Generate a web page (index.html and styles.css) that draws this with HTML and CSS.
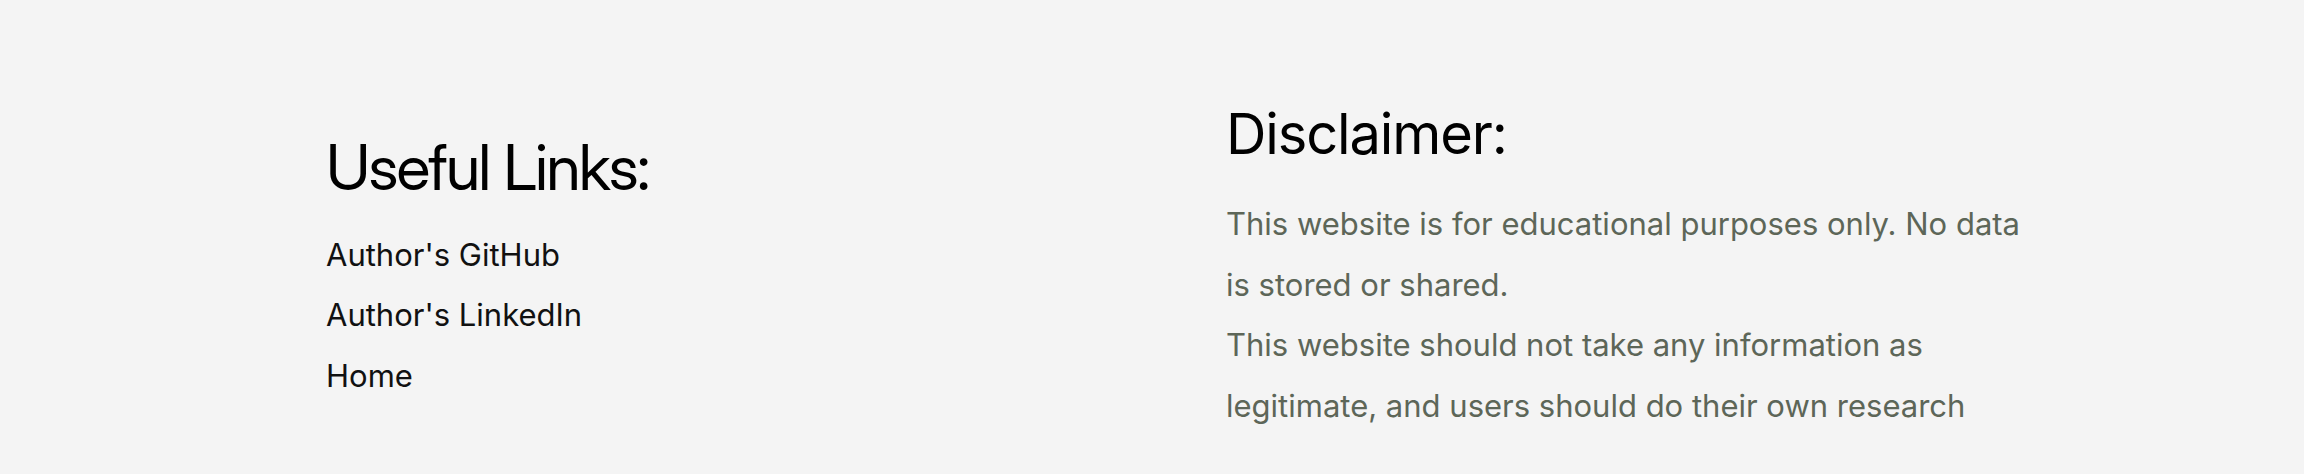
FILE: index.html
```html
<!DOCTYPE html>
<html lang="en">
<head>
<meta charset="utf-8">
<title>Footer</title>
<link rel="stylesheet" href="styles.css">
</head>
<body>
<footer class="footer">
  <section class="col col-links">
    <h2 class="title title-links">Useful Links:</h2>
    <ul class="links">
      <li><a href="#">Author's GitHub</a></li>
      <li><a href="#">Author's LinkedIn</a></li>
      <li><a href="#">Home</a></li>
    </ul>
  </section>
  <section class="col col-disclaimer">
    <h2 class="title title-disclaimer">Disclaimer:</h2>
    <p class="text">This website is for educational purposes only. No data is stored or shared.</p>
    <p class="text">This website should not take any information as legitimate, and users should do their own research</p>
  </section>
</footer>
</body>
</html>
```
FILE: styles.css
```css
html, body {
  margin: 0;
  padding: 0;
  background: #f4f4f4;
}
body {
  font-family: Inter, "Noto Sans", sans-serif;
  color: #111;
}
.footer {
  display: flex;
  align-items: center;
  height: 474px;
  padding: 62px 0 0 326px;
  box-sizing: border-box;
}
.col-links {
  width: 900px;
  flex: none;
}
.col-disclaimer {
  width: 810px;
  flex: none;
}
.title {
  margin: 0;
  font-weight: 400;
  color: #000;
}
.title-links {
  font-family: "Inter Display", Inter, sans-serif;
  font-size: 63px;
  line-height: 75px;
  letter-spacing: -0.03em;
  margin-bottom: 20px;
}
.title-disclaimer {
  font-size: 56px;
  line-height: 68px;
  letter-spacing: -0.02em;
  margin-bottom: 26px;
}
.links {
  list-style: none;
  margin: 0;
  padding: 0;
}
.links li {
  font-size: 31px;
  line-height: 60.5px;
}
.links a {
  color: #111;
  text-decoration: none;
}
.text {
  margin: 0;
  font-size: 31px;
  line-height: 60.5px;
  color: #5d6658;
}
```
